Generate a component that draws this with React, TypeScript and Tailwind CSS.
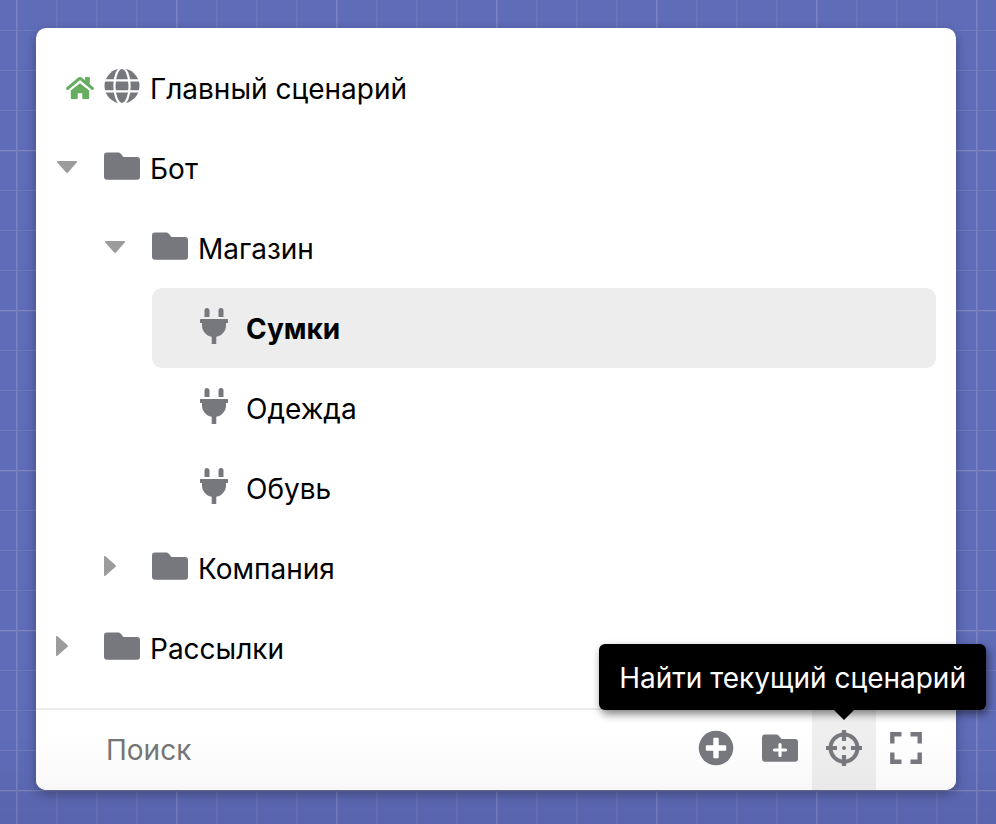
import React from "react";

type IconProps = { className?: string };

function HomeIcon({ className }: IconProps) {
  return (
    <svg viewBox="0 0 28 24" className={className} fill="currentColor" aria-hidden="true">
      <path d="M14 7.200 4.800 14.600V22c0 .6.4 1 1 1h5.900v-5.800h4.600V23h5.900c.6 0 1-.4 1-1v-7.400z" />
      <path d="M19.800 8V1.800h3.200v8.500" stroke="currentColor" strokeWidth="1.200" strokeLinejoin="round" />
      <path
        d="M1.700 12.400 12.700 3.100a2 2 0 0 1 2.600 0l11 9.300"
        fill="none"
        stroke="white"
        strokeWidth="5.400"
      />
      <path
        d="M1.700 12.400 12.700 3.100a2 2 0 0 1 2.600 0l11 9.300"
        fill="none"
        stroke="currentColor"
        strokeWidth="3.200"
        strokeLinecap="round"
      />
      <path d="M19.200 1.200h4.400v8l-4.400-3.700z" />
    </svg>
  );
}

function GlobeIcon({ className }: IconProps) {
  return (
    <svg viewBox="0 0 36 36" className={className} aria-hidden="true">
      <circle cx="18" cy="18" r="17.500" fill="currentColor" />
      <g fill="none" stroke="white" strokeWidth="2.200">
        <ellipse cx="18" cy="18" rx="7.600" ry="18" />
        <path d="M0 12.300h36M0 23.300h36" />
      </g>
    </svg>
  );
}

function FolderIcon({ className }: IconProps) {
  return (
    <svg viewBox="0 0 36 28" className={className} fill="currentColor" aria-hidden="true">
      <path d="M3 .5h11.500c.8 0 1.500.3 2 .9L19.500 5H33a3 3 0 0 1 3 3v16.700a3 3 0 0 1-3 3H3a3 3 0 0 1-3-3V3.500a3 3 0 0 1 3-3z" />
    </svg>
  );
}

function FolderPlusIcon({ className }: IconProps) {
  return (
    <svg viewBox="0 0 36 28" className={className} fill="currentColor" aria-hidden="true">
      <path d="M3 .5h11.500c.8 0 1.500.3 2 .9L19.500 5H33a3 3 0 0 1 3 3v16.700a3 3 0 0 1-3 3H3a3 3 0 0 1-3-3V3.500a3 3 0 0 1 3-3z" />
      <path d="M18 10.500v11M12.500 16h11" stroke="white" strokeWidth="3.200" strokeLinecap="round" />
    </svg>
  );
}

function PlugIcon({ className }: IconProps) {
  return (
    <svg viewBox="0 0 28 36" className={className} fill="currentColor" aria-hidden="true">
      <path d="M4.500 9V2.500a2.500 2.500 0 0 1 5 0V9zM18.500 9V2.500a2.500 2.500 0 0 1 5 0V9z" />
      <path d="M.6 11h26.800c.3 0 .6.300.6.600v2.800c0 .3-.3.600-.6.600H26v2.500c0 5.600-4.100 10.300-9.700 11.300V36h-4.600v-7.200C6.100 27.800 2 23.100 2 17.500V15H.6c-.3 0-.6-.3-.6-.6v-2.800c0-.3.300-.6.600-.6z" />
    </svg>
  );
}

function CaretDownIcon({ className }: IconProps) {
  return (
    <svg viewBox="0 0 20 12" className={className} fill="currentColor" aria-hidden="true">
      <path d="M.8 0h18.400c.8 0 1.100.9.600 1.400l-8.800 10c-.5.600-1.400.600-1.900 0L.3 1.400C-.3.9 0 0 .8 0z" />
    </svg>
  );
}

function CaretRightIcon({ className }: IconProps) {
  return (
    <svg viewBox="0 0 12 20" className={className} fill="currentColor" aria-hidden="true">
      <path d="M0 .8v18.400c0 .8.900 1.100 1.400.600l10-8.800c.6-.5.600-1.400 0-1.900L1.400.3C.9-.3 0 0 0 .8z" />
    </svg>
  );
}

function PlusCircleIcon({ className }: IconProps) {
  return (
    <svg viewBox="0 0 36 36" className={className} aria-hidden="true">
      <circle cx="18" cy="18" r="17.300" fill="currentColor" />
      <g fill="white">
        <rect x="15.300" y="7.800" width="5.400" height="20.400" rx="1" />
        <rect x="7.800" y="15.300" width="20.400" height="5.400" rx="1" />
      </g>
    </svg>
  );
}

function CrosshairIcon({ className }: IconProps) {
  return (
    <svg viewBox="0 0 36 36" className={className} fill="none" stroke="currentColor" aria-hidden="true">
      <circle cx="18" cy="18" r="13.500" strokeWidth="4" />
      <path d="M18 0v11M18 25v11M0 18h11M25 18h11" strokeWidth="4.200" />
      <circle cx="18" cy="18" r="2" fill="currentColor" stroke="none" />
    </svg>
  );
}

function ExpandIcon({ className }: IconProps) {
  return (
    <svg viewBox="0 0 32 32" className={className} fill="none" stroke="currentColor" strokeWidth="4.400" aria-hidden="true">
      <path d="M11.500 2.300H2.300v9.200M20.500 2.300h9.200v9.200M11.500 29.700H2.300v-9.200M20.500 29.700h9.200v-9.200" />
    </svg>
  );
}

type Item = {
  name: string;
  level: 0 | 1 | 2;
  kind: "main" | "folder" | "plug";
  open?: boolean;
  current?: boolean;
};

const items: Item[] = [
  { name: "Главный сценарий", level: 0, kind: "main" },
  { name: "Бот", level: 0, kind: "folder", open: true },
  { name: "Магазин", level: 1, kind: "folder", open: true },
  { name: "Сумки", level: 2, kind: "plug", current: true },
  { name: "Одежда", level: 2, kind: "plug" },
  { name: "Обувь", level: 2, kind: "plug" },
  { name: "Компания", level: 1, kind: "folder", open: false },
  { name: "Рассылки", level: 0, kind: "folder", open: false },
];

const indent = ["ml-0", "ml-12", "ml-24"];

function Row({ item }: { item: Item }) {
  return (
    <li className={indent[item.level]}>
      <button
        type="button"
        aria-expanded={item.open}
        aria-current={item.current}
        className={
          item.current
            ? "flex h-20 w-full items-center rounded-[10px] bg-[#ededed] text-left font-bold"
            : "flex h-20 w-full items-center rounded-[10px] text-left"
        }
      >
        <span className="flex w-12 shrink-0 items-center text-[#9c9c9c]">
          {item.kind === "main" && <HomeIcon className="ml-2.5 h-6 w-7 text-[#66ad60]" />}
          {item.kind === "folder" && item.open && <CaretDownIcon className="mb-0.5 h-3 w-[22px]" />}
          {item.kind === "folder" && !item.open && <CaretRightIcon className="mb-1 h-5 w-3" />}
        </span>
        <span className="flex w-[46px] shrink-0 pb-1 text-[#77787e]">
          {item.kind === "main" && <GlobeIcon className="size-9" />}
          {item.kind === "folder" && <FolderIcon className="h-7 w-9" />}
          {item.kind === "plug" && <PlugIcon className="h-9 w-7" />}
        </span>
        <span className="truncate pt-0.5">{item.name}</span>
      </button>
    </li>
  );
}

const toolButton = "flex h-full w-16 items-center justify-center pb-1";
const lastToolButton = "flex h-full w-15 items-center justify-center pb-1";

export default function App() {
  return (
    <div className="min-h-screen bg-[#5f6cb8] bg-[linear-gradient(to_top,rgba(0,0,40,0.08),transparent_90px),linear-gradient(to_right,#7a82c0_1px,#6f79bc_1px,#6f79bc_2px,transparent_2px),linear-gradient(to_bottom,#7f86c1_1px,#6873ba_1px,#6873ba_2px,transparent_2px),linear-gradient(to_right,#6c76bb_1px,#6571b9_1px,#6571b9_2px,transparent_2px),linear-gradient(to_bottom,#6f79bb_1px,transparent_1px)] bg-[size:100%_100%,160px_160px,160px_160px,40px_40px,40px_40px] bg-[position:0px_0px,16px_0px,0px_150px,16px_0px,0px_30px] py-7 pr-10 pl-9 font-['Inter','Liberation_Sans',sans-serif] text-[28px] leading-8 text-black">
      <main className="rounded-[10px] bg-white shadow-[0_4px_12px_rgba(0,0,0,0.3)]">
        <ul className="p-5">
          {items.map((item) => (
            <Row key={item.name} item={item} />
          ))}
        </ul>
        <div className="flex h-[82px] items-stretch rounded-b-[10px] border-t-2 border-[#ededed] bg-linear-to-b from-white from-30% to-[#f8f8f9] pr-5 pl-[70px]">
          <input
            type="text"
            aria-label="Поиск"
            placeholder="Поиск"
            className="min-w-0 flex-1 bg-transparent outline-none placeholder:text-[#757575]"
          />
          <div className="flex text-[#77787e]">
            <button type="button" aria-label="Добавить сценарий" className={toolButton}>
              <PlusCircleIcon className="size-9" />
            </button>
            <button type="button" aria-label="Добавить папку" className={toolButton}>
              <FolderPlusIcon className="h-7 w-9" />
            </button>
            <div className="relative bg-linear-to-b from-[#f1f1f1] to-[#e9e9ea]">
              <button type="button" aria-label="Найти текущий сценарий" className={toolButton}>
                <CrosshairIcon className="size-9" />
              </button>
              <div
                role="tooltip"
                className="absolute -right-[110px] bottom-full flex h-[66px] items-center rounded-md bg-black px-5 pt-0.5 whitespace-nowrap text-white shadow-[2px_4px_8px_rgba(0,0,0,0.5)]"
              >
                Найти текущий сценарий
                <span className="absolute top-full right-[132px] border-x-10 border-t-10 border-x-transparent border-t-black" />
              </div>
            </div>
            <button type="button" aria-label="Развернуть" className={lastToolButton}>
              <ExpandIcon className="size-8" />
            </button>
          </div>
        </div>
      </main>
    </div>
  );
}
